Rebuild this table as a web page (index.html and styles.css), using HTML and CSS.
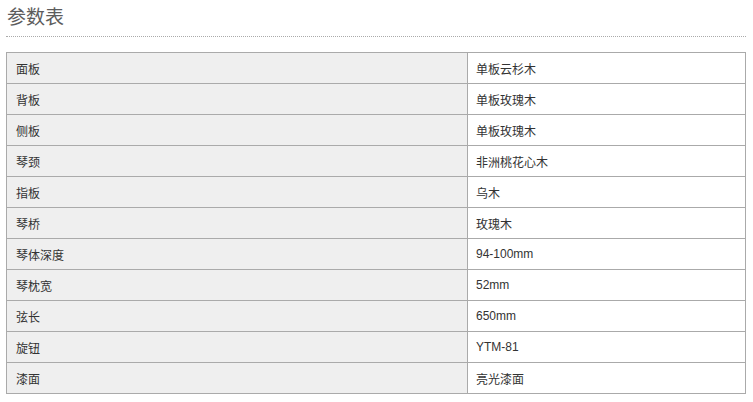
FILE: index.html
```html
<!DOCTYPE html>
<html lang="zh">
<head>
<meta charset="utf-8">
<title>参数表</title>
<link rel="stylesheet" href="styles.css">
</head>
<body>
<div class="wrap">
  <h2 class="title">参数表</h2>
  <table class="spec">
    <colgroup><col class="c1"><col class="c2"></colgroup>
    <tbody>
      <tr><th>面板</th><td>单板云杉木</td></tr>
      <tr><th>背板</th><td>单板玫瑰木</td></tr>
      <tr><th>侧板</th><td>单板玫瑰木</td></tr>
      <tr><th>琴颈</th><td>非洲桃花心木</td></tr>
      <tr><th>指板</th><td>乌木</td></tr>
      <tr><th>琴桥</th><td>玫瑰木</td></tr>
      <tr><th>琴体深度</th><td>94-100mm</td></tr>
      <tr><th>琴枕宽</th><td>52mm</td></tr>
      <tr><th>弦长</th><td>650mm</td></tr>
      <tr><th>旋钮</th><td>YTM-81</td></tr>
      <tr><th>漆面</th><td>亮光漆面</td></tr>
    </tbody>
  </table>
</div>
</body>
</html>
```
FILE: styles.css
```css
html, body {
  margin: 0;
  padding: 0;
  background: #fff;
}
body {
  font-family: "Liberation Sans", "Noto Sans CJK SC", sans-serif;
  color: #333;
}
.wrap {
  padding-left: 6px;
  width: 740px;
}
.title {
  margin: 0;
  padding: 6px 0 6px 1px;
  height: 24px;
  line-height: 24px;
  font-size: 19px;
  font-weight: normal;
  color: #5c5c5c;
  border-bottom: 1px dotted #aaa;
}
.spec {
  margin-top: 15px;
  width: 740px;
  border-collapse: collapse;
  table-layout: fixed;
  font-size: 12px;
}
.c1 { width: 461px; }
.spec th, .spec td {
  height: 30px;
  padding: 0 0 0 9px;
  border: 1px solid #aaa;
  text-align: left;
  font-weight: normal;
  color: #333;
  vertical-align: middle;
}
.spec td {
  padding-left: 8px;
  background: #fff;
}
.spec th {
  background: #efefef;
}
```
